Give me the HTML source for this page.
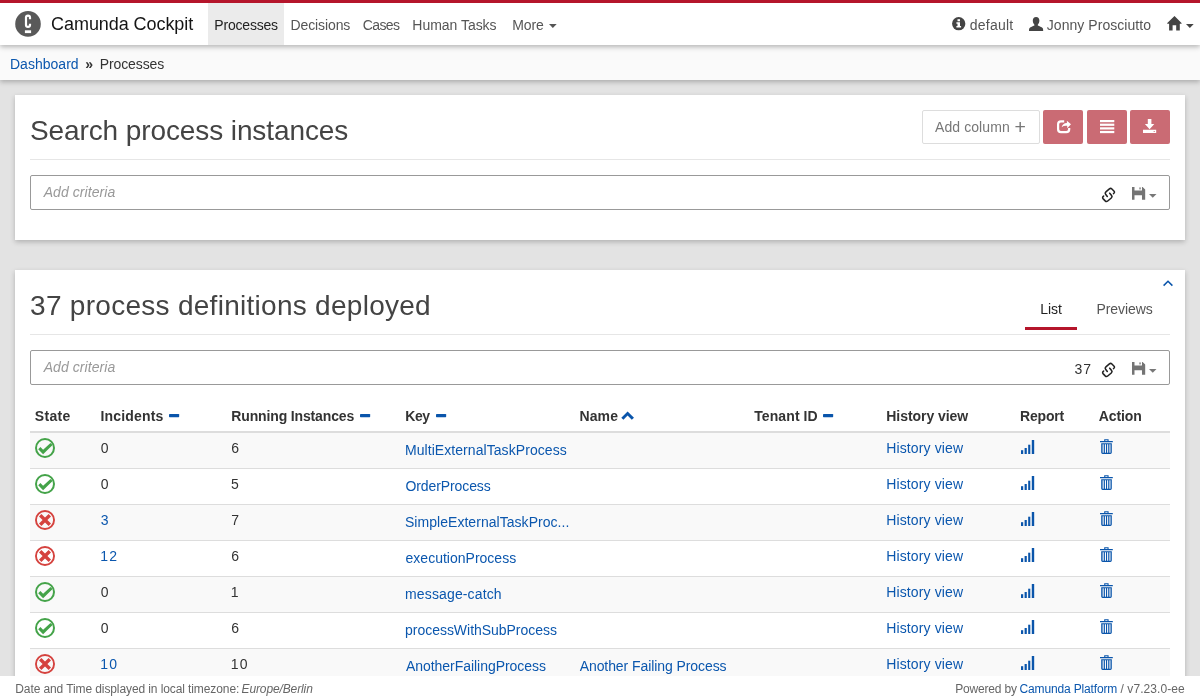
<!DOCTYPE html>
<html lang="en">
<head>
<meta charset="utf-8">
<title>Camunda Cockpit | Processes</title>
<style>
html,body{margin:0;padding:0}
body{width:1200px;height:700px;overflow:hidden;background:#e3e3e3;font-family:"Liberation Sans",sans-serif;position:relative}
#app{position:absolute;left:0;top:0;width:1200px;height:700px;overflow:hidden;will-change:transform}
.t{position:absolute;white-space:pre;line-height:1;text-decoration:none}
h1{margin:0;font-weight:400}
.i{position:absolute;display:block;overflow:visible}
.b{position:absolute;box-sizing:border-box}
#topbar{left:0;top:0;width:1200px;height:45px;background:#fff;border-top:3px solid #b5152b;box-shadow:0 2px 5px rgba(0,0,0,.28)}
#crumbs{left:0;top:45px;width:1200px;height:35px;background:#fafafa;box-shadow:0 2px 5px rgba(0,0,0,.25)}
.card{background:#fff;box-shadow:0 2px 5px rgba(0,0,0,.22)}
#card1{left:15px;top:95px;width:1170px;height:145px}
#card2{left:15px;top:270px;width:1170px;height:430px}
.rule{left:30px;width:1140px;height:1px;background:#e6e6e6}
.inp{left:30px;width:1140px;height:35px;border:1px solid #999;border-radius:2px;background:#fff}
.btn{top:110px;height:34px;border-radius:2px}
.red{background:#ca6b74}
.row{left:30px;width:1140px;height:36px;border-top:1px solid #ddd}
.odd{background:#f9f9f9}
#foot{left:0;top:676px;width:1200px;height:24px;background:#fff}
</style>
</head>
<body>
<div id="app">

<header>
<div class="b" id="crumbs"></div>
<div class="b" id="topbar"></div>
<div class="b" style="left:208px;top:3px;width:76px;height:42px;background:#ebebeb"></div>
<svg class="i" style="left:15px;top:11px" width="26" height="26" viewBox="0 0 26 26"><circle cx="13" cy="12.9" r="12.8" fill="#595959"/><path d="M15 8.2V6.6Q15 4.7 13 4.7Q11 4.7 11 6.6V14.1Q11 16 13 16Q15 16 15 14.1V12.8" fill="none" stroke="#fff" stroke-width="2.2"/><rect x="9.9" y="19.3" width="6.2" height="2.8" fill="#fff"/></svg>
<nav>
<span class="t" style="left:51.09px;top:15px;font-size:18px;color:#151515;letter-spacing:-0.069px;">Camunda Cockpit</span>
<a class="t" style="left:214.35px;top:18px;font-size:14px;color:#222;letter-spacing:-0.199px;" href="#">Processes</a>
<a class="t" style="left:290.45px;top:18px;font-size:14px;color:#555;letter-spacing:-0.097px;" href="#">Decisions</a>
<a class="t" style="left:362.85px;top:18px;font-size:14px;color:#555;letter-spacing:-0.644px;" href="#">Cases</a>
<a class="t" style="left:412.35px;top:18px;font-size:14px;color:#555;letter-spacing:-0.031px;" href="#">Human Tasks</a>
<a class="t" style="left:512.15px;top:18px;font-size:14px;color:#555;letter-spacing:-0.103px;" href="#">More</a>
<a class="t" style="left:969.84px;top:18px;font-size:14px;color:#555;letter-spacing:0.212px;" href="#">default</a>
<a class="t" style="left:1046.77px;top:18px;font-size:14px;color:#555;letter-spacing:0.046px;" href="#">Jonny Prosciutto</a>
</nav>
<svg class="i" style="left:549.4px;top:24px" width="7.7" height="3.9" viewBox="0 0 7.7 3.9"><path d="M0 0H7.7 L3.85 3.9 Z" fill="#555"/></svg>
<svg class="i" style="left:952.3px;top:17.2px" width="13.4" height="13.4" viewBox="0 0 13.4 13.4"><circle cx="6.7" cy="6.7" r="6.65" fill="#444"/><rect x="5.500" y="2.200" width="2.500" height="2.100" fill="#fff"/><path d="M4.400 5.300H8V9.100H9.100V10.600H4.400V9.100H5.500V6.700H4.400Z" fill="#fff"/></svg>
<svg class="i" style="left:1029px;top:16.9px" width="14.2" height="14" viewBox="0 0 14.2 14"><path fill="#444" d="M7.1 0C9.3 0 10.4 1.6 10.4 3.6C10.4 5.4 9.7 6.9 8.8 7.7V8.6C10.5 9.4 12.6 10.1 13.6 11C14.1 11.6 14.2 12.6 14.2 14H0C0 12.6 0.100 11.6 0.600 11C1.600 10.1 3.700 9.400 5.400 8.600V7.700C4.500 6.900 3.800 5.400 3.800 3.600C3.800 1.600 4.900 0 7.100 0Z"/></svg>
<svg class="i" style="left:1167px;top:16.3px" width="14.8" height="14.7" viewBox="0 0 14.8 14.7"><path fill="#444" fill-rule="evenodd" d="M7.500 0L14.800 7.300L14.300 7.800H12.800V14.600H2.100V7.800H0.500L0 7.300Z M5.600 9.300V14.600H9.200V9.300Z"/></svg>
<svg class="i" style="left:1186.1px;top:24px" width="7.7" height="3.9" viewBox="0 0 7.7 3.9"><path d="M0 0H7.7 L3.85 3.9 Z" fill="#444"/></svg>
</header>
<div>
<a class="t" style="left:9.95px;top:57px;font-size:14px;color:#0b57ae;letter-spacing:0.023px;" href="#">Dashboard</a>
<span class="t" style="left:85.13px;top:57px;font-size:14px;color:#333;font-weight:700;">»</span>
<span class="t" style="left:99.75px;top:57px;font-size:14px;color:#333;letter-spacing:-0.112px;">Processes</span>
</div>
<main>
<section>
<div class="b card" id="card1"></div>
<div class="b rule" style="top:159px"></div>
<div class="b inp" style="top:175px"></div>
<div class="b btn" style="left:922px;width:118px;border:1px solid #ddd;background:#fff"></div>
<div class="b btn red" style="left:1043.2px;width:39.8px"></div>
<div class="b btn red" style="left:1087px;width:39.8px"></div>
<div class="b btn red" style="left:1130.1px;width:39.9px"></div>
<h1 class="t" style="left:29.88px;top:117px;font-size:28px;color:#444;letter-spacing:-0.096px;">Search process instances</h1>
<span class="t" style="left:935.08px;top:120px;font-size:14px;color:#777;letter-spacing:0.074px;">Add column</span>
<span class="t" style="left:1014.48px;top:118px;font-size:19.5px;color:#777;">+</span>
<span class="t" style="left:43.67px;top:185px;font-size:14px;color:#999;letter-spacing:0.079px;font-style:italic;">Add criteria</span>
<svg class="i" style="left:1056.9px;top:120px" width="14.4" height="13.4" viewBox="0 0 14.4 13.4"><path d="M7.200 1.300H4.000Q1.100 1.300 1.100 4.200V9.300Q1.100 12.200 4.000 12.200H9.300Q12.200 12.200 12.200 9.300V7.900" fill="none" stroke="#fff" stroke-width="2.200"/><path fill="#fff" d="M9.900 0.800L14.000 4.200L10.200 8.200V5.800Q6.800 5.400 4.600 7.200Q5.600 3.400 9.900 3.100Z"/></svg>
<svg class="i" style="left:1099.7px;top:120px" width="14.3" height="13.2" viewBox="0 0 14.3 13.2"><g fill="#fff"><rect y="0" width="14.3" height="2.2"/><rect y="3.65" width="14.3" height="2.2"/><rect y="7.3" width="14.3" height="2.2"/><rect y="10.950" width="14.300" height="2.2"/></g></svg>
<svg class="i" style="left:1142.9px;top:119px" width="13.3" height="14.2" viewBox="0 0 13.3 14.2"><path fill="#fff" d="M4.800 0H8.400V4.900H11.300L6.600 10.300L1.900 4.900H4.800Z"/><path fill="#fff" fill-rule="evenodd" d="M0 10.700H13.200V14.100H0Z M10.700 12.100V13.000H11.700V12.100Z"/></svg>
<svg class="i" style="left:1098px;top:184px" width="22" height="22" viewBox="0 0 22 22"><g fill="none" stroke="#222" stroke-width="1.55" stroke-linecap="round" stroke-linejoin="round"><path d="M9.3 12.5 L7.6 10.3 Q6.6 9 7.9 7.9 L11.4 4.9 Q12.7 3.8 13.9 5 L16.1 7.2 Q17.1 8.3 15.5 9.6"/><path d="M11.7 9.2 L13.6 11.6 Q14.6 12.9 13.3 14 L9.7 17 Q8.4 18.1 7.2 16.9 L5 14.6 Q4 13.5 5.6 12.1"/></g></svg>
<svg class="i" style="left:1131.6px;top:187px" width="13.2" height="12.8" viewBox="0 0 13.2 12.8"><path fill="#747474" fill-rule="evenodd" d="M0 0H10.6L13.2 2.6V12.8H0Z M2.5 0V3.4H10V0Z M2.5 8.3V12.8H10V8.3Z"/><rect x="7.4" y="0.4" width="1.3" height="2" fill="#747474"/></svg>
<svg class="i" style="left:1149.2px;top:194px" width="7.5" height="3.8" viewBox="0 0 7.5 3.8"><path d="M0 0H7.5 L3.75 3.8 Z" fill="#777"/></svg>
</section>
<section>
<div class="b card" id="card2"></div>
<div class="b rule" style="top:334px"></div>
<div class="b" style="left:1025px;top:327px;width:52px;height:3px;background:#b5152b"></div>
<div class="b inp" style="top:350px"></div>
<h1 class="t" style="left:30.11px;top:292px;font-size:28px;color:#444;letter-spacing:0.277px;">37 process definitions deployed</h1>
<span class="t" style="left:1040.25px;top:302px;font-size:14px;color:#222;letter-spacing:-0.035px;">List</span>
<span class="t" style="left:1096.45px;top:302px;font-size:14px;color:#555;letter-spacing:-0.068px;">Previews</span>
<span class="t" style="left:43.67px;top:360px;font-size:14px;color:#999;letter-spacing:0.079px;font-style:italic;">Add criteria</span>
<span class="t" style="left:1074.48px;top:362px;font-size:14px;color:#333;letter-spacing:0.882px;">37</span>
<svg class="i" style="left:1162px;top:279px" width="12" height="8" viewBox="0 0 12 8"><path d="M1.600 6.600L6 2.200L10.400 6.600" fill="none" stroke="#0a55ab" stroke-width="1.500"/></svg>
<svg class="i" style="left:1098px;top:359px" width="22" height="22" viewBox="0 0 22 22"><g fill="none" stroke="#222" stroke-width="1.55" stroke-linecap="round" stroke-linejoin="round"><path d="M9.3 12.5 L7.6 10.3 Q6.6 9 7.9 7.9 L11.4 4.9 Q12.7 3.8 13.9 5 L16.1 7.2 Q17.1 8.3 15.5 9.6"/><path d="M11.7 9.2 L13.6 11.6 Q14.6 12.9 13.3 14 L9.7 17 Q8.4 18.1 7.2 16.9 L5 14.6 Q4 13.5 5.6 12.1"/></g></svg>
<svg class="i" style="left:1131.8px;top:362px" width="13.2" height="12.8" viewBox="0 0 13.2 12.8"><path fill="#747474" fill-rule="evenodd" d="M0 0H10.6L13.2 2.6V12.8H0Z M2.5 0V3.4H10V0Z M2.5 8.3V12.8H10V8.3Z"/><rect x="7.4" y="0.4" width="1.3" height="2" fill="#747474"/></svg>
<svg class="i" style="left:1149px;top:369px" width="7.5" height="3.8" viewBox="0 0 7.5 3.8"><path d="M0 0H7.5 L3.75 3.8 Z" fill="#777"/></svg>
<div class="b" style="left:30px;top:431px;width:1140px;height:2px;background:#ddd"></div>
<div class="b row odd" style="top:433px;height:35px;border-top:0"></div>
<div class="b row" style="top:468px"></div>
<div class="b row odd" style="top:504px"></div>
<div class="b row" style="top:540px"></div>
<div class="b row odd" style="top:576px"></div>
<div class="b row" style="top:612px"></div>
<div class="b row odd" style="top:648px"></div>
<b class="t" style="left:34.84px;top:409px;font-size:14px;color:#333;letter-spacing:0.315px;font-weight:700;">State</b>
<b class="t" style="left:100.41px;top:409px;font-size:14px;color:#333;letter-spacing:0.188px;font-weight:700;">Incidents</b>
<b class="t" style="left:231.31px;top:409px;font-size:14px;color:#333;letter-spacing:-0.144px;font-weight:700;">Running Instances</b>
<b class="t" style="left:405.31px;top:409px;font-size:14px;color:#333;letter-spacing:-0.461px;font-weight:700;">Key</b>
<b class="t" style="left:579.41px;top:409px;font-size:14px;color:#333;letter-spacing:0.161px;font-weight:700;">Name</b>
<b class="t" style="left:754.25px;top:409px;font-size:14px;color:#333;letter-spacing:0.089px;font-weight:700;">Tenant ID</b>
<b class="t" style="left:886.31px;top:409px;font-size:14px;color:#333;letter-spacing:-0.055px;font-weight:700;">History view</b>
<b class="t" style="left:1020.01px;top:409px;font-size:14px;color:#333;letter-spacing:-0.178px;font-weight:700;">Report</b>
<b class="t" style="left:1098.73px;top:409px;font-size:14px;color:#333;letter-spacing:-0.096px;font-weight:700;">Action</b>
<svg class="i" style="left:169.1px;top:413.9px" width="10.2" height="3.2" viewBox="0 0 10.2 3.2"><rect width="10.2" height="3.2" rx="0.6" fill="#0a55ab"/></svg>
<svg class="i" style="left:359.9px;top:413.9px" width="10.2" height="3.2" viewBox="0 0 10.2 3.2"><rect width="10.2" height="3.2" rx="0.6" fill="#0a55ab"/></svg>
<svg class="i" style="left:435.8px;top:413.9px" width="10.2" height="3.2" viewBox="0 0 10.2 3.2"><rect width="10.2" height="3.2" rx="0.6" fill="#0a55ab"/></svg>
<svg class="i" style="left:823.4px;top:413.9px" width="10.2" height="3.2" viewBox="0 0 10.2 3.2"><rect width="10.2" height="3.2" rx="0.6" fill="#0a55ab"/></svg>
<svg class="i" style="left:621px;top:410.5px" width="13.4" height="9.2" viewBox="0 0 13.4 9.2"><path fill="#0a55ab" d="M6.600 0.400L13 6.800L10.800 8.800L6.600 4.600L2.400 8.800L0.300 6.800Z"/></svg>
<svg class="i" style="left:34px;top:437px" width="22" height="22" viewBox="0 0 22 22"><circle cx="11" cy="11" r="9" fill="none" stroke="#44a349" stroke-width="2"/><path d="M4.200 12.200L6.400 10L9.100 12.700L16.500 5.900L18.600 7.900L9.100 17.200Z" fill="#44a349"/></svg>
<svg class="i" style="left:1020.8px;top:440px" width="13.2" height="14" viewBox="0 0 13.2 14"><g fill="#0a55ab"><rect x="0" y="10.2" width="2.2" height="3.8"/><rect x="3.6" y="8" width="2.2" height="6"/><rect x="7.2" y="4.7" width="2.1" height="9.3"/><rect x="10.8" y="0" width="2.4" height="14"/></g></svg>
<svg class="i" style="left:1100px;top:439px" width="12.8" height="15" viewBox="0 0 12.8 15"><g fill="#0a55ab"><path d="M4.2 0.2H8.6V2H12.8V3.3H0V2H4.2Z M5.3 1.2V2H7.5V1.2Z" fill-rule="evenodd"/><path fill-rule="evenodd" d="M1.2 4.2H11.8V13.6Q11.8 15 10.4 15H2.6Q1.2 15 1.2 13.6Z M2.6 5.2V13.8H3.7V5.2Z M4.9 5.2V13.8H6V5.2Z M7.1 5.2V13.8H8.2V5.2Z M9.4 5.2V13.8H10.5V5.2Z" opacity="1"/></g></svg>
<svg class="i" style="left:34px;top:473px" width="22" height="22" viewBox="0 0 22 22"><circle cx="11" cy="11" r="9" fill="none" stroke="#44a349" stroke-width="2"/><path d="M4.200 12.200L6.400 10L9.100 12.700L16.500 5.900L18.600 7.900L9.100 17.200Z" fill="#44a349"/></svg>
<svg class="i" style="left:1020.8px;top:476px" width="13.2" height="14" viewBox="0 0 13.2 14"><g fill="#0a55ab"><rect x="0" y="10.2" width="2.2" height="3.8"/><rect x="3.6" y="8" width="2.2" height="6"/><rect x="7.2" y="4.7" width="2.1" height="9.3"/><rect x="10.8" y="0" width="2.4" height="14"/></g></svg>
<svg class="i" style="left:1100px;top:475px" width="12.8" height="15" viewBox="0 0 12.8 15"><g fill="#0a55ab"><path d="M4.2 0.2H8.6V2H12.8V3.3H0V2H4.2Z M5.3 1.2V2H7.5V1.2Z" fill-rule="evenodd"/><path fill-rule="evenodd" d="M1.2 4.2H11.8V13.6Q11.8 15 10.4 15H2.6Q1.2 15 1.2 13.6Z M2.6 5.2V13.8H3.7V5.2Z M4.9 5.2V13.8H6V5.2Z M7.1 5.2V13.8H8.2V5.2Z M9.4 5.2V13.8H10.5V5.2Z" opacity="1"/></g></svg>
<svg class="i" style="left:34px;top:509px" width="22" height="22" viewBox="0 0 22 22"><circle cx="11" cy="11" r="9.050" fill="none" stroke="#d5423e" stroke-width="1.900"/><g transform="translate(11 11) rotate(45)"><path d="M-6.800 -1.700H-1.700V-6.800H1.700V-1.700H6.800V1.700H1.700V6.800H-1.700V1.700H-6.800Z" fill="#d5423e"/></g></svg>
<svg class="i" style="left:1020.8px;top:512px" width="13.2" height="14" viewBox="0 0 13.2 14"><g fill="#0a55ab"><rect x="0" y="10.2" width="2.2" height="3.8"/><rect x="3.6" y="8" width="2.2" height="6"/><rect x="7.2" y="4.7" width="2.1" height="9.3"/><rect x="10.8" y="0" width="2.4" height="14"/></g></svg>
<svg class="i" style="left:1100px;top:511px" width="12.8" height="15" viewBox="0 0 12.8 15"><g fill="#0a55ab"><path d="M4.2 0.2H8.6V2H12.8V3.3H0V2H4.2Z M5.3 1.2V2H7.5V1.2Z" fill-rule="evenodd"/><path fill-rule="evenodd" d="M1.2 4.2H11.8V13.6Q11.8 15 10.4 15H2.6Q1.2 15 1.2 13.6Z M2.6 5.2V13.8H3.7V5.2Z M4.9 5.2V13.8H6V5.2Z M7.1 5.2V13.8H8.2V5.2Z M9.4 5.2V13.8H10.5V5.2Z" opacity="1"/></g></svg>
<svg class="i" style="left:34px;top:545px" width="22" height="22" viewBox="0 0 22 22"><circle cx="11" cy="11" r="9.050" fill="none" stroke="#d5423e" stroke-width="1.900"/><g transform="translate(11 11) rotate(45)"><path d="M-6.800 -1.700H-1.700V-6.800H1.700V-1.700H6.800V1.700H1.700V6.800H-1.700V1.700H-6.800Z" fill="#d5423e"/></g></svg>
<svg class="i" style="left:1020.8px;top:548px" width="13.2" height="14" viewBox="0 0 13.2 14"><g fill="#0a55ab"><rect x="0" y="10.2" width="2.2" height="3.8"/><rect x="3.6" y="8" width="2.2" height="6"/><rect x="7.2" y="4.7" width="2.1" height="9.3"/><rect x="10.8" y="0" width="2.4" height="14"/></g></svg>
<svg class="i" style="left:1100px;top:547px" width="12.8" height="15" viewBox="0 0 12.8 15"><g fill="#0a55ab"><path d="M4.2 0.2H8.6V2H12.8V3.3H0V2H4.2Z M5.3 1.2V2H7.5V1.2Z" fill-rule="evenodd"/><path fill-rule="evenodd" d="M1.2 4.2H11.8V13.6Q11.8 15 10.4 15H2.6Q1.2 15 1.2 13.6Z M2.6 5.2V13.8H3.7V5.2Z M4.9 5.2V13.8H6V5.2Z M7.1 5.2V13.8H8.2V5.2Z M9.4 5.2V13.8H10.5V5.2Z" opacity="1"/></g></svg>
<svg class="i" style="left:34px;top:581px" width="22" height="22" viewBox="0 0 22 22"><circle cx="11" cy="11" r="9" fill="none" stroke="#44a349" stroke-width="2"/><path d="M4.200 12.200L6.400 10L9.100 12.700L16.500 5.900L18.600 7.900L9.100 17.200Z" fill="#44a349"/></svg>
<svg class="i" style="left:1020.8px;top:584px" width="13.2" height="14" viewBox="0 0 13.2 14"><g fill="#0a55ab"><rect x="0" y="10.2" width="2.2" height="3.8"/><rect x="3.6" y="8" width="2.2" height="6"/><rect x="7.2" y="4.7" width="2.1" height="9.3"/><rect x="10.8" y="0" width="2.4" height="14"/></g></svg>
<svg class="i" style="left:1100px;top:583px" width="12.8" height="15" viewBox="0 0 12.8 15"><g fill="#0a55ab"><path d="M4.2 0.2H8.6V2H12.8V3.3H0V2H4.2Z M5.3 1.2V2H7.5V1.2Z" fill-rule="evenodd"/><path fill-rule="evenodd" d="M1.2 4.2H11.8V13.6Q11.8 15 10.4 15H2.6Q1.2 15 1.2 13.6Z M2.6 5.2V13.8H3.7V5.2Z M4.9 5.2V13.8H6V5.2Z M7.1 5.2V13.8H8.2V5.2Z M9.4 5.2V13.8H10.5V5.2Z" opacity="1"/></g></svg>
<svg class="i" style="left:34px;top:617px" width="22" height="22" viewBox="0 0 22 22"><circle cx="11" cy="11" r="9" fill="none" stroke="#44a349" stroke-width="2"/><path d="M4.200 12.200L6.400 10L9.100 12.700L16.500 5.900L18.600 7.900L9.100 17.200Z" fill="#44a349"/></svg>
<svg class="i" style="left:1020.8px;top:620px" width="13.2" height="14" viewBox="0 0 13.2 14"><g fill="#0a55ab"><rect x="0" y="10.2" width="2.2" height="3.8"/><rect x="3.6" y="8" width="2.2" height="6"/><rect x="7.2" y="4.7" width="2.1" height="9.3"/><rect x="10.8" y="0" width="2.4" height="14"/></g></svg>
<svg class="i" style="left:1100px;top:619px" width="12.8" height="15" viewBox="0 0 12.8 15"><g fill="#0a55ab"><path d="M4.2 0.2H8.6V2H12.8V3.3H0V2H4.2Z M5.3 1.2V2H7.5V1.2Z" fill-rule="evenodd"/><path fill-rule="evenodd" d="M1.2 4.2H11.8V13.6Q11.8 15 10.4 15H2.6Q1.2 15 1.2 13.6Z M2.6 5.2V13.8H3.7V5.2Z M4.9 5.2V13.8H6V5.2Z M7.1 5.2V13.8H8.2V5.2Z M9.4 5.2V13.8H10.5V5.2Z" opacity="1"/></g></svg>
<svg class="i" style="left:34px;top:653px" width="22" height="22" viewBox="0 0 22 22"><circle cx="11" cy="11" r="9.050" fill="none" stroke="#d5423e" stroke-width="1.900"/><g transform="translate(11 11) rotate(45)"><path d="M-6.800 -1.700H-1.700V-6.800H1.700V-1.700H6.800V1.700H1.700V6.800H-1.700V1.700H-6.800Z" fill="#d5423e"/></g></svg>
<svg class="i" style="left:1020.8px;top:656px" width="13.2" height="14" viewBox="0 0 13.2 14"><g fill="#0a55ab"><rect x="0" y="10.2" width="2.2" height="3.8"/><rect x="3.6" y="8" width="2.2" height="6"/><rect x="7.2" y="4.7" width="2.1" height="9.3"/><rect x="10.8" y="0" width="2.4" height="14"/></g></svg>
<svg class="i" style="left:1100px;top:655px" width="12.8" height="15" viewBox="0 0 12.8 15"><g fill="#0a55ab"><path d="M4.2 0.2H8.6V2H12.8V3.3H0V2H4.2Z M5.3 1.2V2H7.5V1.2Z" fill-rule="evenodd"/><path fill-rule="evenodd" d="M1.2 4.2H11.8V13.6Q11.8 15 10.4 15H2.6Q1.2 15 1.2 13.6Z M2.6 5.2V13.8H3.7V5.2Z M4.9 5.2V13.8H6V5.2Z M7.1 5.2V13.8H8.2V5.2Z M9.4 5.2V13.8H10.5V5.2Z" opacity="1"/></g></svg>
<span class="t" style="left:100.8px;top:441px;font-size:14px;color:#333;">0</span>
<span class="t" style="left:231.25px;top:441px;font-size:14px;color:#333;">6</span>
<a class="t" style="left:404.95px;top:443px;font-size:14px;color:#0b57ae;letter-spacing:0.065px;" href="#">MultiExternalTaskProcess</a>
<a class="t" style="left:886.25px;top:441px;font-size:14px;color:#0b57ae;letter-spacing:0.126px;" href="#">History view</a>
<span class="t" style="left:100.8px;top:477px;font-size:14px;color:#333;">0</span>
<span class="t" style="left:230.89px;top:477px;font-size:14px;color:#333;">5</span>
<a class="t" style="left:405.51px;top:479px;font-size:14px;color:#0b57ae;letter-spacing:-0.104px;" href="#">OrderProcess</a>
<a class="t" style="left:886.25px;top:477px;font-size:14px;color:#0b57ae;letter-spacing:0.126px;" href="#">History view</a>
<a class="t" style="left:100.68px;top:513px;font-size:14px;color:#0b57ae;" href="#">3</a>
<span class="t" style="left:231.28px;top:513px;font-size:14px;color:#333;">7</span>
<a class="t" style="left:404.96px;top:515px;font-size:14px;color:#0b57ae;letter-spacing:0.042px;" href="#">SimpleExternalTaskProc...</a>
<a class="t" style="left:886.25px;top:513px;font-size:14px;color:#0b57ae;letter-spacing:0.126px;" href="#">History view</a>
<a class="t" style="left:100.22px;top:549px;font-size:14px;color:#0b57ae;letter-spacing:1.2px;" href="#">12</a>
<span class="t" style="left:231.25px;top:549px;font-size:14px;color:#333;">6</span>
<a class="t" style="left:405.57px;top:551px;font-size:14px;color:#0b57ae;letter-spacing:0.005px;" href="#">executionProcess</a>
<a class="t" style="left:886.25px;top:549px;font-size:14px;color:#0b57ae;letter-spacing:0.126px;" href="#">History view</a>
<span class="t" style="left:100.8px;top:585px;font-size:14px;color:#333;">0</span>
<span class="t" style="left:230.82px;top:585px;font-size:14px;color:#333;">1</span>
<a class="t" style="left:405.08px;top:587px;font-size:14px;color:#0b57ae;letter-spacing:0.13px;" href="#">message-catch</a>
<a class="t" style="left:886.25px;top:585px;font-size:14px;color:#0b57ae;letter-spacing:0.126px;" href="#">History view</a>
<span class="t" style="left:100.8px;top:621px;font-size:14px;color:#333;">0</span>
<span class="t" style="left:231.25px;top:621px;font-size:14px;color:#333;">6</span>
<a class="t" style="left:405.09px;top:623px;font-size:14px;color:#0b57ae;letter-spacing:-0.032px;" href="#">processWithSubProcess</a>
<a class="t" style="left:886.25px;top:621px;font-size:14px;color:#0b57ae;letter-spacing:0.126px;" href="#">History view</a>
<a class="t" style="left:100.22px;top:657px;font-size:14px;color:#0b57ae;letter-spacing:1.2px;" href="#">10</a>
<span class="t" style="left:230.82px;top:657px;font-size:14px;color:#333;letter-spacing:1.2px;">10</span>
<a class="t" style="left:405.88px;top:659px;font-size:14px;color:#0b57ae;letter-spacing:-0.035px;" href="#">AnotherFailingProcess</a>
<a class="t" style="left:579.68px;top:659px;font-size:14px;color:#0b57ae;letter-spacing:-0.077px;" href="#">Another Failing Process</a>
<a class="t" style="left:886.25px;top:657px;font-size:14px;color:#0b57ae;letter-spacing:0.126px;" href="#">History view</a>
</section>
</main>
<footer>
<div class="b" id="foot"></div>
<span class="t" style="left:15.28px;top:683px;font-size:12px;color:#666;letter-spacing:-0.1px;">Date and Time displayed in local timezone: </span>
<span class="t" style="left:241.5px;top:683px;font-size:12px;color:#666;letter-spacing:-0.114px;font-style:italic;">Europe/Berlin</span>
<span class="t" style="left:955.18px;top:683px;font-size:12px;color:#666;letter-spacing:-0.183px;">Powered by </span>
<a class="t" style="left:1019.54px;top:683px;font-size:12px;color:#0b57ae;letter-spacing:-0.151px;" href="#">Camunda Platform</a>
<span class="t" style="left:1117.13px;top:683px;font-size:12px;color:#666;letter-spacing:0.075px;"> / v7.23.0-ee</span>
</footer>
</div>
</body></html>
